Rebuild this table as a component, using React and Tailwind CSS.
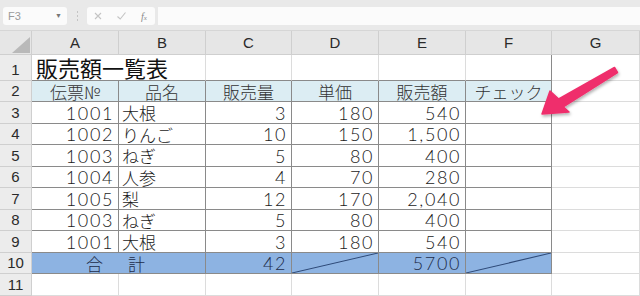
import React from "react";

const WC = [
  "w-[32px]",
  "w-[87px]",
  "w-[87px]",
  "w-[86px]",
  "w-[87px]",
  "w-[87px]",
  "w-[86px]",
  "w-[88px]",
];

const rows = [
  ["1001", "大根", "3", "180", "540"],
  ["1002", "りんご", "10", "150", "1,500"],
  ["1003", "ねぎ", "5", "80", "400"],
  ["1004", "人参", "4", "70", "280"],
  ["1005", "梨", "12", "170", "2,040"],
  ["1003", "ねぎ", "5", "80", "400"],
  ["1001", "大根", "3", "180", "540"],
];
const rowHC = ["h-[22px]", "h-[21px]", "h-[22px]", "h-[21px]", "h-[22px]", "h-[21px]", "h-[22px]"];

const dark = "border-[#8a8a8a]";
const light = "border-[#dcdcdc]";
const latin = "font-['Liberation_Sans',Arial,sans-serif]";
const num =
  "justify-end pr-[4px] tracking-[1.6px] text-[18px] leading-none font-['Lato','Noto_Sans',sans-serif] font-light";

function Diag() {
  return (
    <svg className="absolute inset-0 w-full h-full" preserveAspectRatio="none" viewBox="0 0 100 100">
      <line x1="0" y1="100" x2="100" y2="0" stroke="#2e4a78" strokeWidth="1" vectorEffect="non-scaling-stroke" />
    </svg>
  );
}

function RowHead({ n }) {
  return (
    <div
      className={`shrink-0 w-[32px] h-full flex items-end justify-center bg-[#ececec] border-r border-b border-[#cfcfcf] text-[15px] leading-[20px] text-[#2a2a2a] ${latin}`}
    >
      {n}
    </div>
  );
}

export default function App() {
  return (
    <div className="relative w-[640px] h-[296px] overflow-hidden bg-white font-['Noto_Sans_CJK_JP','Noto_Sans',sans-serif]">
      {/* toolbar */}
      <div className="h-[31px] bg-[#e9e9e9] border-b border-[#d6d6d6] flex items-start pt-[7px] pl-[3px]">
        <div className={`w-[64px] h-[18px] bg-[#fbfbfb] rounded-[3px] flex items-center justify-between px-[5px] text-[11px] text-[#9a9a9a] ${latin}`}>
          <span>F3</span>
          <span className="text-[7px] text-[#777]">▼</span>
        </div>
        <div className="w-[20px] h-[18px] flex flex-col items-center justify-center gap-[2px]">
          <div className="w-[1px] h-[2px] bg-[#c4c4c4]" />
          <div className="w-[1px] h-[2px] bg-[#c4c4c4]" />
          <div className="w-[1px] h-[2px] bg-[#c4c4c4]" />
        </div>
        <div className="w-[68px] h-[18px] bg-[#fbfbfb] rounded-[3px] flex items-center px-[4px] gap-[10px]">
          <svg width="10" height="10" viewBox="0 0 10 10" className="ml-[2px]">
            <path d="M2 2L8 8M8 2L2 8" stroke="#c4c4c4" strokeWidth="1.1" />
          </svg>
          <svg width="11" height="10" viewBox="0 0 11 10" className="ml-[3px]">
            <path d="M1.5 5.5L4.2 8L9.5 1.5" stroke="#c4c4c4" strokeWidth="1.1" fill="none" />
          </svg>
          <span className="ml-[4px] text-[10px] italic text-[#888] font-['Liberation_Serif',serif]">
            f<span className="text-[7px]">x</span>
          </span>
        </div>
        <div className="ml-[3px] flex-1 h-[18px] bg-[#fbfbfb]" />
      </div>

      {/* column headers */}
      <div className="flex h-[24px]">
        <div className="shrink-0 w-[32px] relative bg-[#e6e6e6] border-r border-b border-[#cfcfcf]">
          <svg className="absolute left-[12px] top-[6px]" width="18" height="16" viewBox="0 0 18 16">
            <polygon points="0,16 18,16 18,0" fill="#b9b9b9" />
          </svg>
        </div>
        {["A", "B", "C", "D", "E", "F", "G"].map((c, i) => (
          <div
            key={c}
            className={`shrink-0 ${WC[i + 1]} flex items-center justify-center bg-[#e6e6e6] border-r border-b border-[#cfcfcf] text-[15px] text-[#2a2a2a] pt-[2px] ${latin}`}
          >
            {c}
          </div>
        ))}
      </div>

      {/* row 1 */}
      <div className="flex h-[26px]">
        <RowHead n="1" />
        <div className={`shrink-0 w-[174px] border-b ${dark} border-r-[1px] border-r-[#dcdcdc] text-[22px] leading-none flex items-end pl-[4px] pb-[2px] text-[#111]`}>
          <span className="whitespace-nowrap">販売額一覧表</span>
        </div>
        <div className={`shrink-0 w-[86px] border-b ${dark} border-r-[1px] border-r-[#dcdcdc]`} />
        <div className={`shrink-0 w-[87px] border-b ${dark} border-r-[1px] border-r-[#dcdcdc]`} />
        <div className={`shrink-0 w-[87px] border-b ${dark} border-r-[1px] border-r-[#dcdcdc]`} />
        <div className={`shrink-0 w-[86px] border-b border-r ${dark}`} />
        <div className={`shrink-0 w-[88px] border-b border-r ${light}`} />
      </div>

      {/* row 2 header */}
      <div className="flex h-[21px]">
        <RowHead n="2" />
        {["伝票№", "品名", "販売量", "単価", "販売額", "チェック"].map((t, i) => (
          <div
            key={t}
            className={`shrink-0 ${WC[i + 1]} flex items-center justify-center bg-[#dcedf3] border-r border-b ${dark} text-[17px] leading-none text-[#333] font-light`}
          >
            {t}
          </div>
        ))}
        <div className={`shrink-0 w-[88px] border-r border-b ${light}`} />
      </div>

      {/* data rows */}
      {rows.map((r, ri) => (
        <div key={ri} className={`flex ${rowHC[ri]}`}>
          <RowHead n={String(ri + 3)} />
          {r.map((v, ci) => (
            <div
              key={ci}
              className={`shrink-0 ${WC[ci + 1]} flex items-center border-r border-b ${dark} text-[#1a1a1a] ${
                ci === 1 ? "justify-start pl-[3px] text-[17px] leading-none font-light" : num
              }`}
            >
              {v}
            </div>
          ))}
          <div className={`shrink-0 w-[86px] border-r border-b ${dark}`} />
          <div className={`shrink-0 w-[88px] border-r border-b ${light}`} />
        </div>
      ))}

      {/* row 10 total */}
      <div className="flex h-[21px]">
        <RowHead n="10" />
        <div
          className={`shrink-0 w-[174px] flex items-center justify-center gap-[25px] pr-[6px] bg-[#8db3e2] border-r border-b ${dark} text-[17px] leading-none text-[#1d2c4a] font-light`}
        >
          <span>合</span>
          <span>計</span>
        </div>
        <div className={`shrink-0 w-[86px] flex items-center bg-[#8db3e2] border-r border-b ${dark} text-[#1d2c4a] ${num}`}>
          42
        </div>
        <div className={`shrink-0 w-[87px] relative bg-[#8db3e2] border-r border-b ${dark}`}>
          <Diag />
        </div>
        <div className={`shrink-0 w-[87px] flex items-center bg-[#8db3e2] border-r border-b ${dark} text-[#1d2c4a] ${num}`}>
          5700
        </div>
        <div className={`shrink-0 w-[86px] relative bg-[#8db3e2] border-r border-b ${dark}`}>
          <Diag />
        </div>
        <div className={`shrink-0 w-[88px] border-r border-b ${light}`} />
      </div>

      {/* row 11 */}
      <div className="flex h-[22px]">
        <RowHead n="11" />
        {[1, 2, 3, 4, 5, 6, 7].map((i) => (
          <div key={i} className={`shrink-0 ${WC[i]} border-r border-b ${light}`} />
        ))}
      </div>

      {/* arrow */}
      <svg className="absolute left-0 top-0 pointer-events-none" width="640" height="296" viewBox="0 0 640 296">
        <defs>
          <filter id="sh" x="-20%" y="-20%" width="140%" height="140%">
            <feDropShadow dx="1" dy="2" stdDeviation="1.5" floodColor="#000" floodOpacity="0.3" />
          </filter>
        </defs>
        <polygon
          points="542,114 550,91 558.7,99 614.5,67.5 617.5,72.5 563.3,106.8 569,112"
          fill="#ef2f6c"
          stroke="#ef2f6c"
          strokeWidth="1.5"
          strokeLinejoin="round"
          filter="url(#sh)"
        />
      </svg>
    </div>
  );
}
